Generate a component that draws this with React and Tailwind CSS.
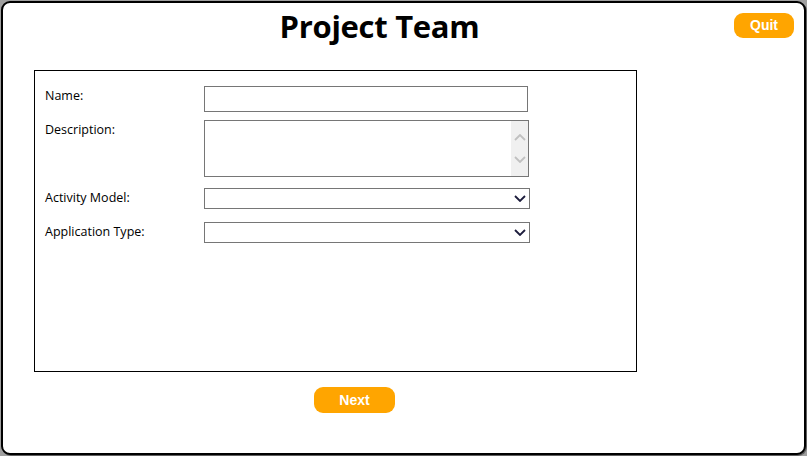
import React from 'react';

const Chevron = ({ up = false, className = '' }) => (
  <svg width="12" height="7" viewBox="0 0 12 7" className={className}>
    <path
      d={up ? 'M1 6 L6 1 L11 6' : 'M1 1 L6 6 L11 1'}
      fill="none"
      stroke="currentColor"
      strokeWidth="1.8"
    />
  </svg>
);

const Select = () => (
  <div className="w-[326px] h-[21px] border border-[#767676] bg-white flex items-center justify-end pr-[3px]">
    <Chevron className="text-[#1c1c3c]" />
  </div>
);

const Row = ({ label, children, className = '' }) => (
  <div className={`flex items-start ${className}`}>
    <div className="w-[159px] pt-px text-[12.5px] leading-[17px] text-black">{label}</div>
    {children}
  </div>
);

const App = () => {
  return (
    <div className="w-[807px] h-[456px] bg-[#a0a0a0] pl-px pt-px overflow-hidden" style={{ fontFamily: '"Open Sans", sans-serif' }}>
      <div className="relative w-[805px] h-[454px] bg-white border-2 border-black rounded-[9px] shadow-[1px_1px_0_#606060] px-px pt-px">
        {/* Header */}
        <div className="pr-[48px] flex justify-center h-[66px]">
          <h1 className="text-[31px] leading-[44px] font-bold text-black tracking-[-0.3px]">Project Team</h1>
        </div>

        <button className="absolute left-[731px] top-[10px] w-[60px] h-[25px] rounded-[9px] bg-[#ffa500] text-white text-[14px] font-bold" style={{ fontFamily: '"Liberation Sans", Arial, sans-serif' }}>
          Quit
        </button>

        {/* Form panel */}
        <div className="ml-[30px] w-[603px] h-[302px] border border-black pl-[10px] pt-[15px]">
          <Row label="Name:">
            <div className="w-[324px] h-[26px] border border-[#767676] bg-white" />
          </Row>

          <Row label="Description:" className="mt-[8px]">
            <div className="w-[325px] h-[57px] border border-[#767676] bg-white flex justify-end">
              <div className="w-[17px] h-full bg-[#f0f0f0] flex flex-col items-center justify-center gap-[15px]">
                <Chevron up className="text-[#c0c0c0]" />
                <Chevron className="text-[#c0c0c0]" />
              </div>
            </div>
          </Row>

          <Row label="Activity Model:" className="mt-[11px]">
            <Select />
          </Row>

          <Row label="Application Type:" className="mt-[13px]">
            <Select />
          </Row>
        </div>

        <button className="ml-[310px] mt-[15px] w-[81px] h-[26px] rounded-[9px] bg-[#ffa500] text-white text-[14px] font-bold" style={{ fontFamily: '"Liberation Sans", Arial, sans-serif' }}>
          Next
        </button>
      </div>
    </div>
  );
};

export default App;
